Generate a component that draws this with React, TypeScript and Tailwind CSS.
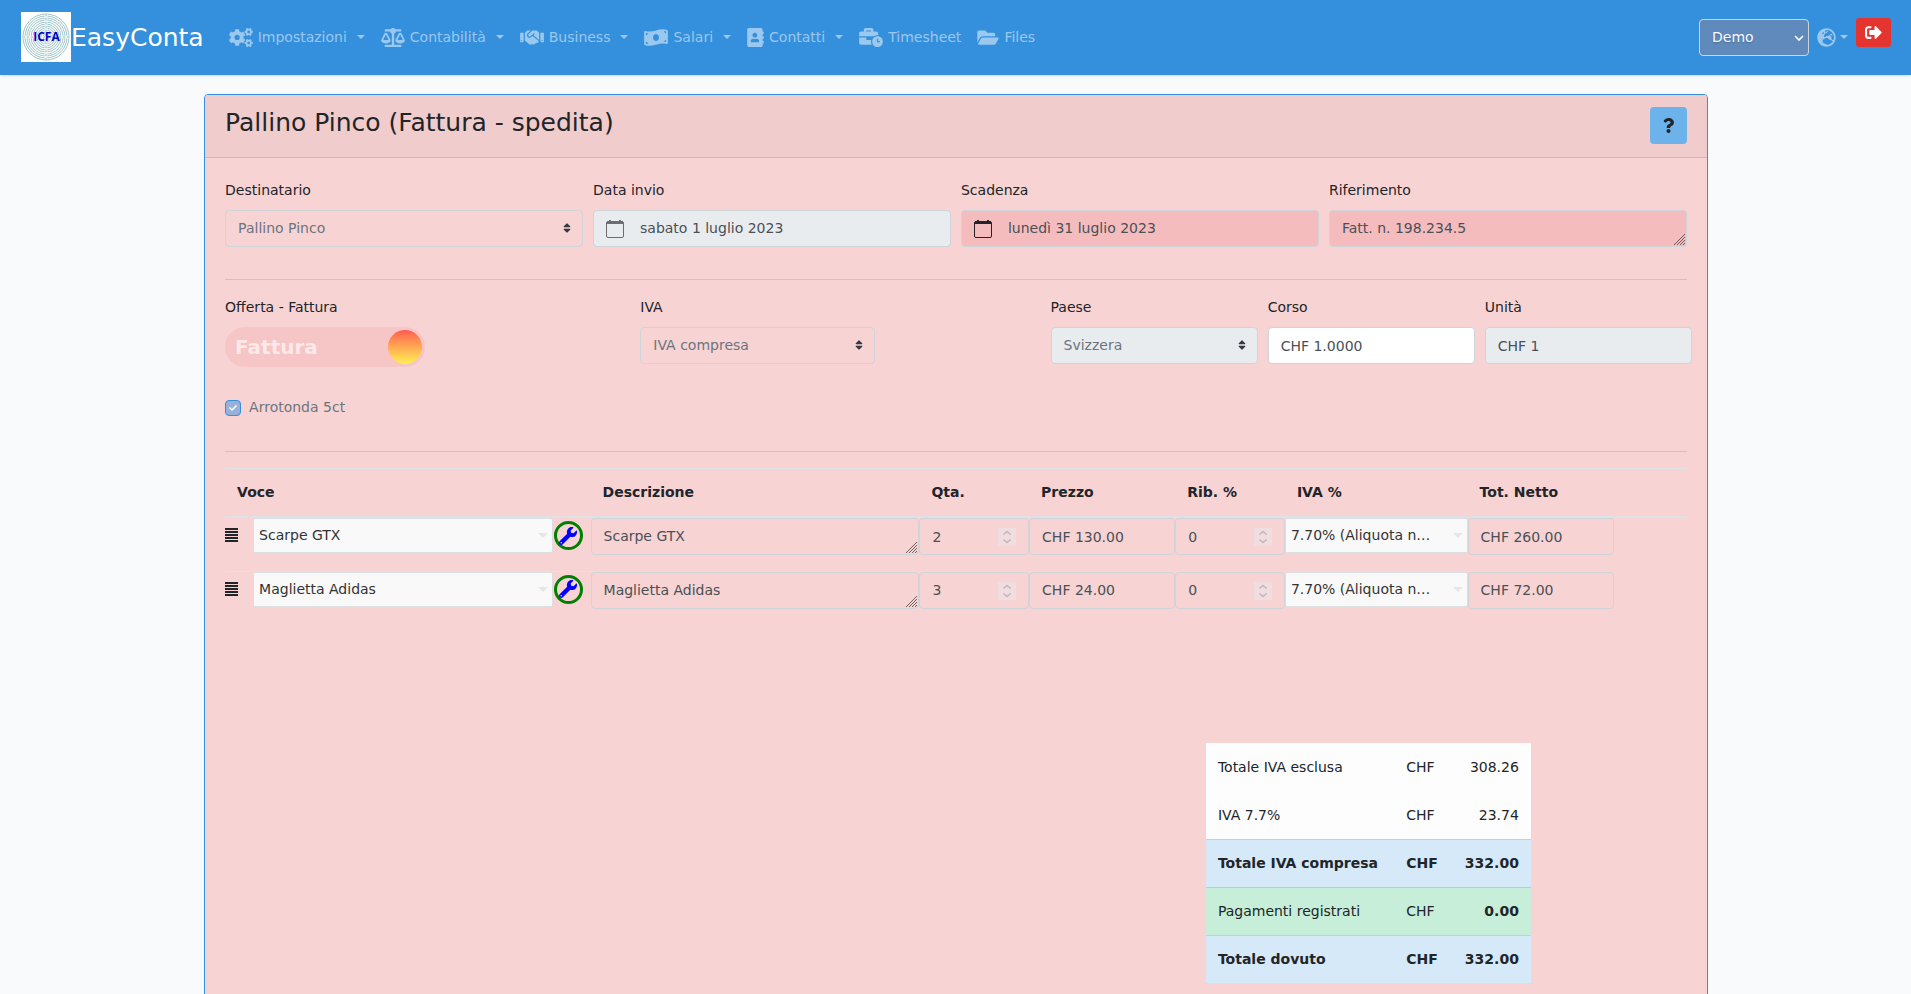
import React from "react";
import {
  FaAddressBook,
  FaBalanceScale,
  FaBusinessTime,
  FaCheck,
  FaCogs,
  FaFolderOpen,
  FaGlobeEurope,
  FaHandshake,
  FaMoneyBillWave,
  FaQuestion,
  FaSignOutAlt,
  FaSort,
  FaWrench,
} from "react-icons/fa";
import type { IconType } from "react-icons";

type NavItem = {
  label: string;
  icon: IconType;
  iconWidth: string;
  dropdown?: boolean;
};

const navItems: NavItem[] = [
  { label: "Impostazioni", icon: FaCogs, iconWidth: "w-6", dropdown: true },
  {
    label: "Contabilità",
    icon: FaBalanceScale,
    iconWidth: "w-6",
    dropdown: true,
  },
  { label: "Business", icon: FaHandshake, iconWidth: "w-6", dropdown: true },
  { label: "Salari", icon: FaMoneyBillWave, iconWidth: "w-6", dropdown: true },
  {
    label: "Contatti",
    icon: FaAddressBook,
    iconWidth: "w-[17px]",
    dropdown: true,
  },
  { label: "Timesheet", icon: FaBusinessTime, iconWidth: "w-6" },
  { label: "Files", icon: FaFolderOpen, iconWidth: "w-[22px]" },
];

type InvoiceLine = {
  id: number;
  item: string;
  qty: number;
  price: string;
  discount: number;
  vat: string;
  total: string;
};

const lines: InvoiceLine[] = [
  {
    id: 1,
    item: "Scarpe GTX",
    qty: 2,
    price: "CHF 130.00",
    discount: 0,
    vat: "7.70% (Aliquota normale)",
    total: "CHF 260.00",
  },
  {
    id: 2,
    item: "Maglietta Adidas",
    qty: 3,
    price: "CHF 24.00",
    discount: 0,
    vat: "7.70% (Aliquota normale)",
    total: "CHF 72.00",
  },
];

const columns = [
  { label: "Voce", width: "w-[25%]" },
  { label: "Descrizione", width: "w-[22.5%]" },
  { label: "Qta.", width: "w-[7.5%]" },
  { label: "Prezzo", width: "w-[10%]" },
  { label: "Rib. %", width: "w-[7.5%]" },
  { label: "IVA %", width: "w-[12.5%]" },
  { label: "Tot. Netto", width: "w-[10%]" },
];

const totals = [
  {
    label: "Totale IVA esclusa",
    amount: "308.26",
    row: "border-transparent",
    strong: "",
  },
  {
    label: "IVA 7.7%",
    amount: "23.74",
    row: "border-transparent",
    strong: "",
  },
  {
    label: "Totale IVA compresa",
    amount: "332.00",
    row: "bg-[#d6e9f8] border-[#afd5f2] font-bold",
    strong: "",
  },
  {
    label: "Pagamenti registrati",
    amount: "0.00",
    row: "bg-[#c7eed8] border-[#98e1b7]",
    strong: "font-bold",
  },
  {
    label: "Totale dovuto",
    amount: "332.00",
    row: "bg-[#d6e9f8] border-[#afd5f2] font-bold",
    strong: "",
  },
];

const box = "block w-full h-[37px] rounded border border-[#ced4da] px-3";
const control = `${box} text-[#495057]`;

const Caret = ({ className }: { className: string }) => (
  <span
    className={`border-x-4 border-t-4 border-x-transparent border-t-current ${className}`}
  />
);

const Logo = () => (
  <svg viewBox="0 0 50 50" className="size-[50px] bg-white">
    {[3, 5, 7, 9, 11, 13, 15, 17, 19, 21, 23].map((r) => (
      <circle
        key={r}
        cx="25"
        cy="25"
        r={r}
        fill="none"
        stroke="#9cc4c8"
        strokeWidth="1"
      />
    ))}
    <path d="M25 2v46M2 25h46" stroke="#fff" strokeWidth="3" opacity="0.6" />
    <path
      d="M25 2v46M2 25h46"
      stroke="#9cc4c8"
      strokeWidth="1"
      strokeDasharray="2 2"
    />
    <text
      x="25.5"
      y="29"
      textAnchor="middle"
      className="fill-[#0000c8] font-['Open_Sans',sans-serif] text-[12px] font-bold"
    >
      ICFA
    </text>
  </svg>
);

const CalendarIcon = ({ className }: { className?: string }) => (
  <svg viewBox="0 0 18 18" className={className} fill="none">
    <rect x="0.5" y="1.5" width="17" height="16" rx="1.5" stroke="currentColor" />
    <path d="M1 1h16v3H1zM3 0h2v1H3zM13 0h2v1h-2z" fill="currentColor" />
  </svg>
);

const ResizeGrip = () => (
  <svg
    viewBox="0 0 11 11"
    className="pointer-events-none absolute right-[2px] bottom-[2px] size-[11px]"
    stroke="#5e5052"
    strokeWidth="0.9"
  >
    <path d="M0 11 11 0M3 11l8-8M6 11l5-5M9 11l2-2" />
  </svg>
);

const Field: React.FC<{
  id: string;
  label: string;
  className?: string;
  children: React.ReactNode;
}> = ({ id, label, className, children }) => (
  <div className={className}>
    <label htmlFor={id} className="mb-2 block">
      {label}
    </label>
    {children}
  </div>
);

const SelectField: React.FC<{ id: string; value: string; bg?: string }> = ({
  id,
  value,
  bg = "bg-transparent",
}) => (
  <div className="relative">
    <select
      id={id}
      disabled
      className={`${box} ${bg} appearance-none text-[#6c757d] opacity-100`}
    >
      <option>{value}</option>
    </select>
    <FaSort className="pointer-events-none absolute top-3 right-[10px] size-3 text-[#343a40]" />
  </div>
);

const DateField: React.FC<{
  id: string;
  value: string;
  bg: string;
  icon: string;
}> = ({ id, value, bg, icon }) => (
  <div
    className={`flex h-[37px] items-center rounded border border-[#ced4da] pl-3 ${bg}`}
  >
    <CalendarIcon className={`mr-4 size-[18px] shrink-0 ${icon}`} />
    <input
      id={id}
      type="text"
      readOnly
      defaultValue={value}
      className="min-w-0 flex-1 text-[#495057]"
    />
  </div>
);

const ComboBox: React.FC<{ label: string; value: string }> = ({
  label,
  value,
}) => (
  <div className="relative min-w-0 flex-1">
    <select
      aria-label={label}
      disabled
      className="block h-[35px] w-full appearance-none truncate rounded-xs border border-[#dcdfe0] bg-[#f9f9f9] pr-8 pl-[5px] text-[#333] opacity-100"
    >
      <option>{value}</option>
    </select>
    <span className="pointer-events-none absolute top-[15px] right-[5px] border-x-[5px] border-t-[5px] border-x-transparent border-t-[#e6e6e6]" />
  </div>
);

const NumberBox: React.FC<{ label: string; value: number }> = ({
  label,
  value,
}) => (
  <div className="relative">
    <input
      aria-label={label}
      type="number"
      disabled
      defaultValue={value}
      className={`${control} [appearance:textfield]`}
    />
    <svg
      viewBox="0 0 18 18"
      className="pointer-events-none absolute top-[10px] right-[13px] size-[18px] bg-[#f0dde0]"
      fill="none"
      stroke="#c3b5bb"
      strokeWidth="1.5"
    >
      <path d="m5.5 6.5 3.5-3 3.5 3M5.5 11.5l3.5 3 3.5-3" />
    </svg>
  </div>
);

const Navbar = () => (
  <nav className="flex items-center bg-[#3490dc] pt-3 pr-5 pb-[13px] pl-[21px] shadow-sm">
    <a href="#" className="mr-[17px] flex items-center text-[25px] text-white">
      <Logo />
      EasyConta
    </a>
    <ul className="flex flex-1 items-center text-white/50">
      {navItems.map(({ label, icon: Icon, iconWidth, dropdown }) => (
        <li key={label}>
          <a href="#" className="flex items-center px-2">
            <Icon className={`mr-[5px] h-[19px] ${iconWidth}`} />
            {label}
            {dropdown && <Caret className="ml-[10px]" />}
          </a>
        </li>
      ))}
    </ul>
    <div className="relative">
      <select
        aria-label="Azienda"
        className="block h-[37px] w-[110px] appearance-none rounded border border-[#ced4da] bg-[#608abc] px-3 text-[#f8fafc] text-shadow-sm"
      >
        <option>Demo</option>
      </select>
      <svg
        viewBox="0 0 10 6"
        className="pointer-events-none absolute top-4 right-[5px] h-[6px] w-[10px]"
        fill="none"
        stroke="#fff"
        strokeWidth="1.6"
      >
        <path d="m1 1 4 4 4-4" />
      </svg>
    </div>
    <button
      type="button"
      aria-label="Lingua"
      className="flex items-center px-2 text-white/50"
    >
      <FaGlobeEurope className="size-[19px]" />
      <Caret className="ml-1" />
    </button>
    <button
      type="button"
      aria-label="Esci"
      className="mb-[9px] flex h-[29px] w-[35px] items-center justify-center rounded-[3px] bg-[#e3342f] text-white"
    >
      <FaSignOutAlt className="size-[17px]" />
    </button>
  </nav>
);

const LineRow: React.FC<{ line: InvoiceLine }> = ({ line }) => (
  <tr className="align-top [&>td]:border-t [&>td]:border-[#dee2e6]">
    <td className="h-[54px]">
      <div className="flex items-center pr-2">
        <svg
          viewBox="0 0 13 15"
          className="mr-[15px] h-[15px] w-[13px] shrink-0 text-[#212529]"
          fill="currentColor"
        >
          <path d="M0 0h13v2H0zM0 3h13v2H0zM0 6h13v2H0zM0 9h13v2H0zM0 12h13v2H0z" />
        </svg>
        <ComboBox label="Voce" value={line.item} />
        <button
          type="button"
          aria-label="Modifica voce"
          className="ml-px flex size-[29px] items-center justify-center rounded-full border-3 border-[#008000] text-[#0000ff]"
        >
          <FaWrench className="size-[18px]" />
        </button>
      </div>
    </td>
    <td>
      <div className="relative">
        <textarea
          aria-label="Descrizione"
          disabled
          rows={1}
          defaultValue={line.item}
          className={`${control} resize-none overflow-hidden py-[6px]`}
        />
        <ResizeGrip />
      </div>
    </td>
    <td>
      <NumberBox label="Quantità" value={line.qty} />
    </td>
    <td>
      <input
        aria-label="Prezzo"
        type="text"
        disabled
        defaultValue={line.price}
        className={control}
      />
    </td>
    <td>
      <NumberBox label="Ribasso" value={line.discount} />
    </td>
    <td>
      <ComboBox label="Aliquota IVA" value={line.vat} />
    </td>
    <td>
      <input
        aria-label="Totale netto"
        type="text"
        disabled
        defaultValue={line.total}
        className={control}
      />
    </td>
  </tr>
);

const App = () => {
  return (
    <div className="min-h-screen bg-[#f8fafc] font-['DejaVu_Sans',sans-serif] text-[14px] leading-[23px] text-[#212529]">
      <Navbar />
      <main className="mx-auto w-4/5 pt-[19px] pr-3 pl-[13px]">
        <section className="rounded border border-[#3490dc] bg-[#f7d3d3] bg-clip-padding">
          <header className="flex items-start justify-between rounded-t-[3px] border-b border-[#d4b4b4] bg-[#f0cccc] px-5 pt-3 pb-[13px]">
            <h1 className="text-[25px] leading-8">
              Pallino Pinco (Fattura - spedita)
            </h1>
            <button
              type="button"
              aria-label="Aiuto"
              className="flex size-[37px] items-center justify-center rounded bg-[#6cb2eb]"
            >
              <FaQuestion className="size-[15px]" />
            </button>
          </header>

          <div className="px-5 pt-[21px] pb-10">
            <div className="grid grid-cols-4 gap-[10px]">
              <Field id="recipient" label="Destinatario">
                <SelectField id="recipient" value="Pallino Pinco" />
              </Field>
              <Field id="sent" label="Data invio">
                <DateField
                  id="sent"
                  value="sabato 1 luglio 2023"
                  bg="bg-[#e9ecef]"
                  icon="text-[#6b6e71]"
                />
              </Field>
              <Field id="due" label="Scadenza">
                <DateField
                  id="due"
                  value="lunedì 31 luglio 2023"
                  bg="bg-[#f5bcbe]"
                  icon="text-[#212529]"
                />
              </Field>
              <Field id="reference" label="Riferimento">
                <div className="relative">
                  <textarea
                    id="reference"
                    rows={1}
                    disabled
                    defaultValue="Fatt. n. 198.234.5"
                    className={`${control} resize-none overflow-hidden bg-[#f5bcbe] py-[6px]`}
                  />
                  <ResizeGrip />
                </div>
              </Field>
            </div>

            <hr className="mt-8 mb-4 border-black/10" />

            <div className="-mr-[5px] grid grid-cols-[405fr_235fr_155fr_207fr_207fr_207fr] gap-x-[10px]">
              <div>
                <div className="mb-2">Offerta - Fattura</div>
                <label className="flex h-10 w-[200px] items-center justify-between rounded-full bg-[#f6c5c5] pr-[3px] pl-[10px]">
                  <input
                    type="checkbox"
                    role="switch"
                    defaultChecked
                    className="sr-only"
                  />
                  <span className="text-[20px] font-bold text-[#fce9e9]">
                    Fattura
                  </span>
                  <span className="size-[34px] rounded-full bg-linear-to-b from-[#ff5950] to-[#ffef52]" />
                </label>
              </div>
              <Field id="vat" label="IVA">
                <SelectField id="vat" value="IVA compresa" />
              </Field>
              <Field id="country" label="Paese" className="col-start-4">
                <SelectField id="country" value="Svizzera" bg="bg-[#e9ecef]" />
              </Field>
              <Field id="rate" label="Corso">
                <input
                  id="rate"
                  type="text"
                  defaultValue="CHF 1.0000"
                  className={`${control} bg-white`}
                />
              </Field>
              <Field id="unit" label="Unità">
                <input
                  id="unit"
                  type="text"
                  readOnly
                  defaultValue="CHF 1"
                  className={`${control} bg-[#e9ecef]`}
                />
              </Field>
            </div>

            <label className="mt-[29px] flex items-center gap-2 text-[#6c757d]">
              <span className="relative">
                <input
                  type="checkbox"
                  defaultChecked
                  disabled
                  className="block size-4 appearance-none rounded border border-[#3490dc] bg-[#98b1d8]"
                />
                <FaCheck className="absolute top-1 left-1 size-2 text-white" />
              </span>
              Arrotonda 5ct
            </label>

            <hr className="mt-8 mb-4 border-black/10" />

            <table className="w-full table-fixed border-collapse">
              <thead>
                <tr className="border-t border-b-2 border-[#dee2e6]">
                  {columns.map(({ label, width }) => (
                    <th key={label} className={`${width} p-3 text-left font-bold`}>
                      {label}
                    </th>
                  ))}
                  <th className="w-[5%]" />
                </tr>
              </thead>
              <tbody>
                {lines.map((line) => (
                  <LineRow key={line.id} line={line} />
                ))}
              </tbody>
            </table>

            <div className="mt-[118px] flex justify-end pr-[156px]">
              <table className="w-[325px] border-collapse bg-[#fdfdfd]">
                <tbody>
                  {totals.map(({ label, amount, row, strong }) => (
                    <tr key={label} className={`border-t ${row}`}>
                      <td className="p-3">{label}</td>
                      <td className="p-3">CHF</td>
                      <td className={`p-3 text-right ${strong}`}>{amount}</td>
                    </tr>
                  ))}
                </tbody>
              </table>
            </div>
          </div>
        </section>
      </main>
    </div>
  );
};

export default App;
